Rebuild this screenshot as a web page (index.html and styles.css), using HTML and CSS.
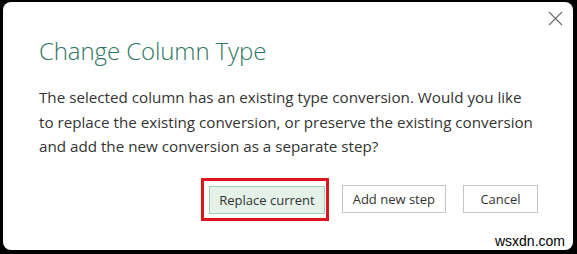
FILE: index.html
```html
<!DOCTYPE html>
<html lang="en">
<head>
  <meta charset="UTF-8">
  <title>Change Column Type</title>
  <link rel="stylesheet" href="styles.css">
</head>
<body>
  <div class="dialog">
    <button class="close-btn" title="Close">
      <svg width="15" height="15" viewBox="0 0 15 15">
        <path d="M1 1 L14 14 M14 1 L1 14" stroke="#707070" stroke-width="1.2" fill="none"/>
      </svg>
    </button>

    <h1 class="title">Change Column Type</h1>
    <p class="message">
      The selected column has an existing type conversion. Would you like<br>
      to replace the existing conversion, or preserve the existing conversion<br>
      and add the new conversion as a separate step?
    </p>

    <div class="actions">
      <div class="highlight">
        <button class="btn btn-primary">Replace current</button>
      </div>
      <button class="btn">Add new step</button>
      <button class="btn">Cancel</button>
    </div>

    <div class="watermark">wsxdn.com</div>
  </div>
</body>
</html>
```

FILE: styles.css
```css
* {
  box-sizing: border-box;
  margin: 0;
  padding: 0;
}

body {
  background: #000000;
  width: 577px;
  height: 254px;
  padding: 2px 4px 4px 3px;
  font-family: 'Open Sans', 'Liberation Sans', sans-serif;
  overflow: hidden;
}

.dialog {
  position: relative;
  background: #ffffff;
  height: 248px;
  border-radius: 8px;
  padding: 32px 35px 0 36px;
}

.close-btn {
  position: absolute;
  top: 9px;
  right: 10px;
  background: none;
  border: none;
  width: 15px;
  height: 15px;
  display: flex;
}

.title {
  font-family: 'Open Sans', sans-serif;
  font-weight: 300;
  font-size: 24px;
  line-height: 34px;
  color: #2f7563;
  letter-spacing: -0.1px;
}

.message {
  margin-top: 17px;
  font-size: 15.2px;
  line-height: 24.5px;
  color: #333333;
  white-space: nowrap;
}

.actions {
  display: flex;
  align-items: center;
  justify-content: flex-end;
  gap: 17px;
  margin-top: 19px;
}

.highlight {
  display: flex;
  border: 3px solid #e0141e;
  padding: 5px 1px 4px 5px;
  margin-right: -4px;
}

.btn {
  font-family: 'Open Sans', sans-serif;
  font-size: 13px;
  color: #333333;
  background: #ffffff;
  border: 1px solid #c6c6c6;
  height: 28px;
  padding: 0 10px;
  white-space: nowrap;
}

.btn-primary {
  background: #e4f2e9;
  border-color: #9fcfb3;
  padding: 0 9px;
}

.actions .btn:not(.btn-primary) {
  min-width: 75px;
}

.watermark {
  position: absolute;
  right: 8px;
  bottom: 1px;
  font-family: 'Liberation Sans', sans-serif;
  font-size: 14px;
  color: #000000;
}
```
